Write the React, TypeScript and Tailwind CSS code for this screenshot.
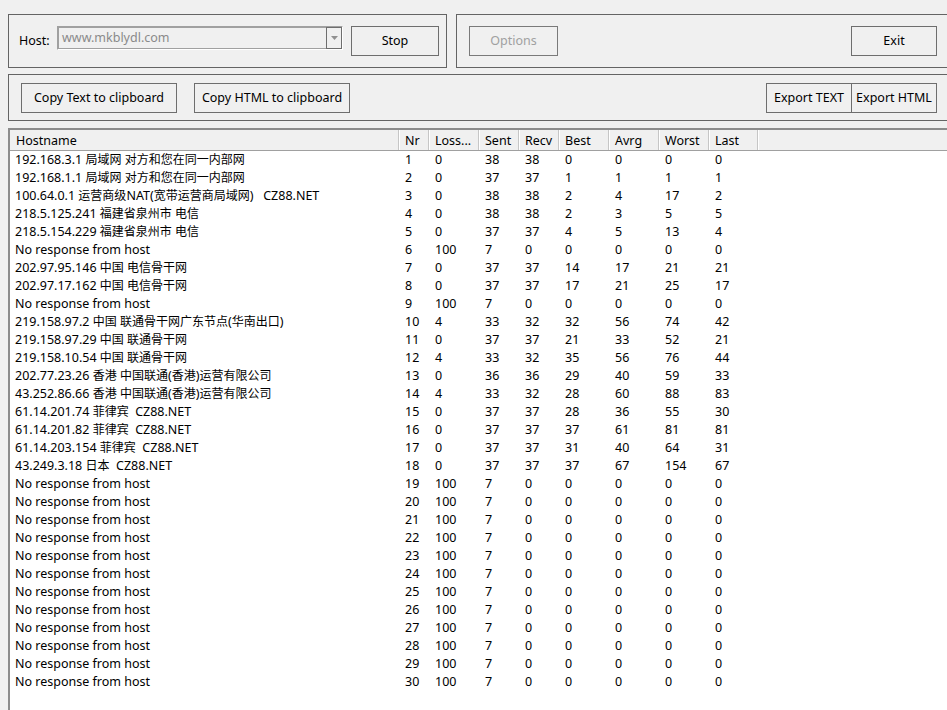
import React from "react";

type Hop = {
  nr: number;
  host: string;
  loss: number;
  sent: number;
  recv: number;
  best: number;
  avrg: number;
  worst: number;
  last: number;
};

const NO_RESP = "No response from host";

const known: Record<number, [string, number, number, number, number, number, number, number]> = {
  1: ["192.168.3.1 局域网 对方和您在同一内部网", 0, 38, 38, 0, 0, 0, 0],
  2: ["192.168.1.1 局域网 对方和您在同一内部网", 0, 37, 37, 1, 1, 1, 1],
  3: ["100.64.0.1 运营商级NAT(宽带运营商局域网)   CZ88.NET", 0, 38, 38, 2, 4, 17, 2],
  4: ["218.5.125.241 福建省泉州市 电信", 0, 38, 38, 2, 3, 5, 5],
  5: ["218.5.154.229 福建省泉州市 电信", 0, 37, 37, 4, 5, 13, 4],
  7: ["202.97.95.146 中国 电信骨干网", 0, 37, 37, 14, 17, 21, 21],
  8: ["202.97.17.162 中国 电信骨干网", 0, 37, 37, 17, 21, 25, 17],
  10: ["219.158.97.2 中国 联通骨干网广东节点(华南出口)", 4, 33, 32, 32, 56, 74, 42],
  11: ["219.158.97.29 中国 联通骨干网", 0, 37, 37, 21, 33, 52, 21],
  12: ["219.158.10.54 中国 联通骨干网", 4, 33, 32, 35, 56, 76, 44],
  13: ["202.77.23.26 香港 中国联通(香港)运营有限公司", 0, 36, 36, 29, 40, 59, 33],
  14: ["43.252.86.66 香港 中国联通(香港)运营有限公司", 4, 33, 32, 28, 60, 88, 83],
  15: ["61.14.201.74 菲律宾  CZ88.NET", 0, 37, 37, 28, 36, 55, 30],
  16: ["61.14.201.82 菲律宾  CZ88.NET", 0, 37, 37, 37, 61, 81, 81],
  17: ["61.14.203.154 菲律宾  CZ88.NET", 0, 37, 37, 31, 40, 64, 31],
  18: ["43.249.3.18 日本  CZ88.NET", 0, 37, 37, 37, 67, 154, 67],
};

const hops: Hop[] = Array.from({ length: 30 }, (_, i) => {
  const nr = i + 1;
  const k = known[nr];
  if (!k) {
    return { nr, host: NO_RESP, loss: 100, sent: 7, recv: 0, best: 0, avrg: 0, worst: 0, last: 0 };
  }
  const [host, loss, sent, recv, best, avrg, worst, last] = k;
  return { nr, host, loss, sent, recv, best, avrg, worst, last };
});

const columns = [
  { label: "Hostname", w: "w-[389px]" },
  { label: "Nr", w: "w-[30px]" },
  { label: "Loss...", w: "w-[50px]" },
  { label: "Sent", w: "w-[40px]" },
  { label: "Recv", w: "w-[40px]" },
  { label: "Best", w: "w-[50px]" },
  { label: "Avrg", w: "w-[50px]" },
  { label: "Worst", w: "w-[50px]" },
  { label: "Last", w: "w-[49px]" },
];

// CJK runs render a touch smaller than the latin text, like the native list view
function HostText({ text }: { text: string }) {
  const parts = text.split(/([\u4e00-\u9fff]+)/);
  return (
    <>
      {parts.map((p, i) =>
        /[\u4e00-\u9fff]/.test(p) ? (
          <span key={i} className="text-[12px]">
            {p}
          </span>
        ) : (
          <span key={i}>{p}</span>
        )
      )}
    </>
  );
}

function WinButton({
  children,
  className = "",
  disabled = false,
}: {
  children: React.ReactNode;
  className?: string;
  disabled?: boolean;
}) {
  return (
    <button
      className={`h-[30px] border bg-[#f0f0f0] ${
        disabled ? "text-[#a0a0a0] border-[#7a7a7a]" : "text-black border-[#6e6e6e]"
      } ${className}`}
    >
      {children}
    </button>
  );
}

export default function App() {
  return (
    <div
      className="w-[947px] h-[710px] overflow-hidden bg-[#f0f0f0] text-black text-[12.5px] leading-none"
      style={{ fontFamily: '"Noto Sans", "Noto Sans CJK SC", sans-serif' }}
    >
      {/* Top controls */}
      <div className="flex gap-[9px] pt-[14px] pl-[8px]">
        <div className="flex items-start w-[439px] h-[54px] border border-[#646464] pt-[11px] pl-[10px]">
          <span className="mt-[9px] w-[38px]">Host:</span>
          <div className="flex w-[286px] h-[24px] border border-t-[#a0a0a0] border-l-[#a0a0a0] border-b-white border-r-white">
            <div className="flex-1 flex items-center border border-[#a0a0a0] border-r-0 pl-[3px] text-[#8a8a8a]">
              www.mkblydl.com
            </div>
            <div className="w-[16px] flex items-center justify-center border border-[#6e6e6e] bg-[#f0f0f0]">
              <svg width="7" height="4" viewBox="0 0 7 4">
                <path d="M0 0 L7 0 L3.5 4 Z" fill="#909090" />
              </svg>
            </div>
          </div>
          <WinButton className="ml-[8px] w-[88px]">Stop</WinButton>
        </div>
        <div className="flex-1 -mr-[20px] h-[54px] border border-[#646464] pt-[11px] pl-[12px] pr-[29px] flex items-start justify-between">
          <WinButton disabled className="w-[89px]">Options</WinButton>
          <WinButton className="w-[86px]">Exit</WinButton>
        </div>
      </div>

      {/* Clipboard / export row */}
      <div className="mt-[6px] ml-[8px] -mr-[20px] h-[47px] border border-[#646464] flex items-start pt-[8px] pl-[12px] pr-[29px]">
        <WinButton className="w-[156px]">Copy Text to clipboard</WinButton>
        <WinButton className="ml-[17px] w-[156px]">Copy HTML to clipboard</WinButton>
        <div className="ml-auto flex">
          <WinButton className="w-[86px]">Export TEXT</WinButton>
          <WinButton className="w-[86px] -ml-px">Export HTML</WinButton>
        </div>
      </div>

      {/* Trace table */}
      <div className="mt-[7px] ml-[8px] -mr-[20px] h-[600px] border-t-2 border-l-2 border-[#8c8c8c] bg-white">
        <div className="flex h-[21px] bg-[#f0f0f0] border-b border-[#a0a0a0]">
          {columns.map((c) => (
            <div
              key={c.label}
              className={`${c.w} pl-[6px] flex items-center border-r border-[#c6c6c6] shadow-[1px_0_0_#ffffff] pt-[2px]`}
            >
              {c.label}
            </div>
          ))}
          <div className="flex-1" />
        </div>
        {hops.map((h) => {
          const cells = [h.nr, h.loss, h.sent, h.recv, h.best, h.avrg, h.worst, h.last];
          return (
            <div key={h.nr} className="flex h-[18px]">
              <div className={`${columns[0].w} pl-[5px] flex items-center whitespace-pre`}>
                <HostText text={h.host} />
              </div>
              {cells.map((v, i) => (
                <div key={i} className={`${columns[i + 1].w} pl-[6px] flex items-center`}>
                  {v}
                </div>
              ))}
            </div>
          );
        })}
      </div>
    </div>
  );
}
